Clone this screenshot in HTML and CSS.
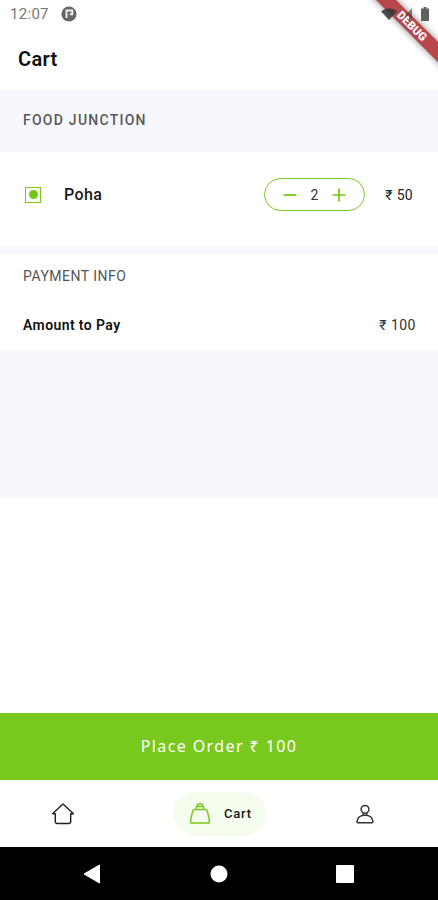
FILE: index.html
```html
<!DOCTYPE html>
<html lang="en">
<head>
    <meta charset="UTF-8">
    <meta name="viewport" content="width=device-width, initial-scale=1.0">
    <title>Cart</title>
    <link rel="stylesheet" href="styles.css">
</head>
<body>
    <div class="debug-corner">
        <div class="debug-banner">DEBUG</div>
    </div>
    <div class="status-bar">
        <span class="status-time">12:07</span>
        <svg class="status-app" width="16" height="16" viewBox="0 0 16 16">
            <circle cx="8" cy="8" r="7.6" fill="#666"/>
            <path d="M5.5 12V4.5h5.8v3.7H8.8" fill="none" stroke="#eee" stroke-width="1.9"/>
        </svg>
        <div class="status-icons">
            <svg width="16" height="12" viewBox="0 0 16 12"><path d="M0 3.2Q8-2.8 16 3.2L8 12z" fill="#333" fill-opacity=".85"/></svg>
            <svg width="11" height="13" viewBox="0 0 11 13"><path d="M11 0v13H8V6L0 13z" fill="#333" fill-opacity=".6"/></svg>
            <svg class="battery" width="8" height="14" viewBox="0 0 8 14"><path d="M2.5 0h3v1.5H8V14H0V1.5h2.5z" fill="#606060"/></svg>
        </div>
    </div>

    <header class="header"><h1>Cart</h1></header>

    <main class="content">
        <div class="restaurant">FOOD JUNCTION</div>
        <div class="cart-item">
            <span class="veg-mark"></span>
            <span class="item-name">Poha</span>
            <div class="stepper">
                <button type="button" aria-label="Remove one">
                    <svg width="14" height="14" viewBox="0 0 14 14"><path d="M.5 7h13"/></svg>
                </button>
                <span class="count">2</span>
                <button type="button" aria-label="Add one">
                    <svg width="14" height="14" viewBox="0 0 14 14"><path d="M.5 7h13M7 .5v13"/></svg>
                </button>
            </div>
            <span class="price">₹ 50</span>
        </div>
        <div class="payment">
            <div class="payment-title">PAYMENT INFO</div>
            <div class="payment-row">
                <span class="payment-label">Amount to Pay</span>
                <span class="payment-total">₹ 100</span>
            </div>
        </div>
    </main>

    <button type="button" class="order-btn">Place Order ₹ 100</button>

    <nav class="tabs">
        <a class="tab" aria-label="Home">
            <svg width="24" height="22" viewBox="0 0 24 22" fill="none" stroke="#222" stroke-width="1.4" stroke-linejoin="round" stroke-linecap="round">
                <path d="M4.3 10.8H1.5L12 1l10.5 9.8h-2.8v7.7q0 2-2 2H6.3q-2 0-2-2z"/>
            </svg>
        </a>
        <a class="tab tab-active">
            <svg width="20" height="21" viewBox="0 0 20 21" fill="none" stroke="#79c81e" stroke-width="1.4" stroke-linejoin="round">
                <path d="M.8 20V17L2.4 9Q3 6.5 5 6.5h10q2 0 2.6 2.5l1.6 8v3z"/>
                <path d="M6.3 6.5V4Q6.3 3.3 7.3 3.3 7.3 1 8.8 1h2.4q1.5 0 1.5 2.3 1 0 1 .7v2.5M7.3 3.5h5.4"/>
            </svg>
            <span>Cart</span>
        </a>
        <a class="tab" aria-label="Profile">
            <svg width="18" height="20" viewBox="0 0 18 20" fill="none" stroke="#333" stroke-width="1.5" stroke-linejoin="round">
                <circle cx="9" cy="5.3" r="3.9"/>
                <path d="M1 17.400Q2 11.300 9 11.300t8 6.100q0 1.300-1.200 1.300H2.200Q1 18.700 1 17.400zM7.200 9v2.300M10.800 9v2.300"/>
            </svg>
        </a>
    </nav>

    <div class="system-nav">
        <svg width="18" height="20" viewBox="0 0 18 20"><path d="M1 10 16.5 1v18z" fill="#fff" stroke="#fff" stroke-linejoin="round"/></svg>
        <svg width="18" height="18" viewBox="0 0 18 18"><circle cx="9" cy="9" r="8.5" fill="#fff"/></svg>
        <svg width="18" height="18" viewBox="0 0 18 18"><rect width="18" height="18" rx="1" fill="#fff"/></svg>
    </div>
</body>
</html>
```
FILE: styles.css
```css
* {
    box-sizing: border-box;
}
body {
    margin: 0;
    height: 100vh;
    display: flex;
    flex-direction: column;
    position: relative;
    overflow: hidden;
    background: #fff;
    color: #171717;
    font-family: Roboto, "Noto Sans", sans-serif;
}
button {
    border: none;
    background: none;
    padding: 0;
    font-family: inherit;
}
svg {
    display: block;
}
/* sits over the debug ribbon */
.status-bar {
    position: relative;
    z-index: 2;
    height: 28px;
    display: flex;
    align-items: center;
    padding: 0 9px 0 10px;
}
.status-time {
    width: 51px;
    font-size: 15px;
    letter-spacing: 0.3px;
    color: #777;
}
.status-icons {
    margin-left: auto;
    display: flex;
    align-items: center;
    gap: 4px;
}
.battery {
    margin-left: 5px;
}
/* clips the ribbon to the top right corner */
.debug-corner {
    position: absolute;
    top: 0;
    right: 0;
    width: 90px;
    height: 90px;
    overflow: hidden;
    pointer-events: none;
}
.debug-banner {
    position: absolute;
    top: 19px;
    left: -6px;
    width: 140px;
    height: 14px;
    transform: rotate(45deg);
    background: rgba(160, 10, 15, 0.75);
    box-shadow: 0 0 7px rgba(0, 0, 0, 0.5);
    color: #fff;
    font-size: 11.5px;
    font-weight: 900;
    line-height: 15px;
    text-align: center;
}
.header {
    height: 62px;
    display: flex;
    align-items: center;
    padding: 0 18px;
}
.header h1 {
    margin: 0;
    font-size: 20px;
    font-weight: 600;
    letter-spacing: 0.3px;
    color: #111;
}
.content {
    height: 408px;
    background: #f7f8fd;
}
.restaurant {
    height: 62px;
    padding-left: 23px;
    line-height: 61px;
    font-size: 14px;
    font-weight: 500;
    letter-spacing: 1.25px;
    color: #585858;
}
.cart-item {
    height: 94px;
    display: flex;
    align-items: center;
    padding: 0 25px 9px;
    background: #fff;
}
.veg-mark {
    width: 16px;
    height: 16px;
    display: flex;
    align-items: center;
    justify-content: center;
    border: 1px solid #79c81e;
}
.veg-mark::after {
    content: "";
    width: 9px;
    height: 9px;
    border-radius: 50%;
    background: #72c714;
}
.item-name {
    margin-left: 23px;
    font-size: 16px;
    font-weight: 500;
    letter-spacing: 0.4px;
}
.stepper {
    width: 101px;
    height: 33px;
    margin-left: auto;
    display: flex;
    align-items: center;
    justify-content: space-between;
    padding: 0 18px;
    border: 1px solid #79c81e;
    border-radius: 17px;
}
.stepper path {
    fill: none;
    stroke: #72c714;
    stroke-width: 1.7;
}
.count {
    font-size: 14px;
    color: #333;
}
.price {
    width: 48px;
    font-size: 14px;
    letter-spacing: 0.3px;
    text-align: right;
    color: #222;
}
.payment {
    height: 96px;
    margin-top: 8px;
    padding: 13px 22px 0 23px;
    background: #fff;
}
.payment-title {
    font-size: 14px;
    line-height: 18px;
    letter-spacing: 0.5px;
    color: #555;
}
.payment-row {
    margin-top: 31px;
    display: flex;
    justify-content: space-between;
    font-size: 14px;
    line-height: 18px;
}
.payment-label {
    font-weight: 600;
    letter-spacing: 0.4px;
    color: #111;
}
.payment-total {
    letter-spacing: 0.5px;
    color: #333;
}
.order-btn {
    height: 67px;
    margin-top: auto;
    padding-bottom: 2px;
    background: #79c81e;
    color: #fff;
    font-family: "Noto Sans", sans-serif;
    font-size: 16px;
    letter-spacing: 1.4px;
}
.tabs {
    height: 67px;
    display: grid;
    grid-template-columns: 126px 1fr 147px;
    align-items: center;
    justify-items: center;
}
.tab-active {
    width: 93px;
    height: 44px;
    margin-left: 22px;
    display: flex;
    align-items: center;
    gap: 14px;
    padding-left: 17px;
    border-radius: 22px;
    background: #f5fdee;
    font-size: 13px;
    font-weight: 500;
    letter-spacing: 0.8px;
}
.system-nav {
    height: 53px;
    display: flex;
    align-items: center;
    justify-content: space-between;
    padding: 0 84px 0 83px;
    background: #000;
}
```
